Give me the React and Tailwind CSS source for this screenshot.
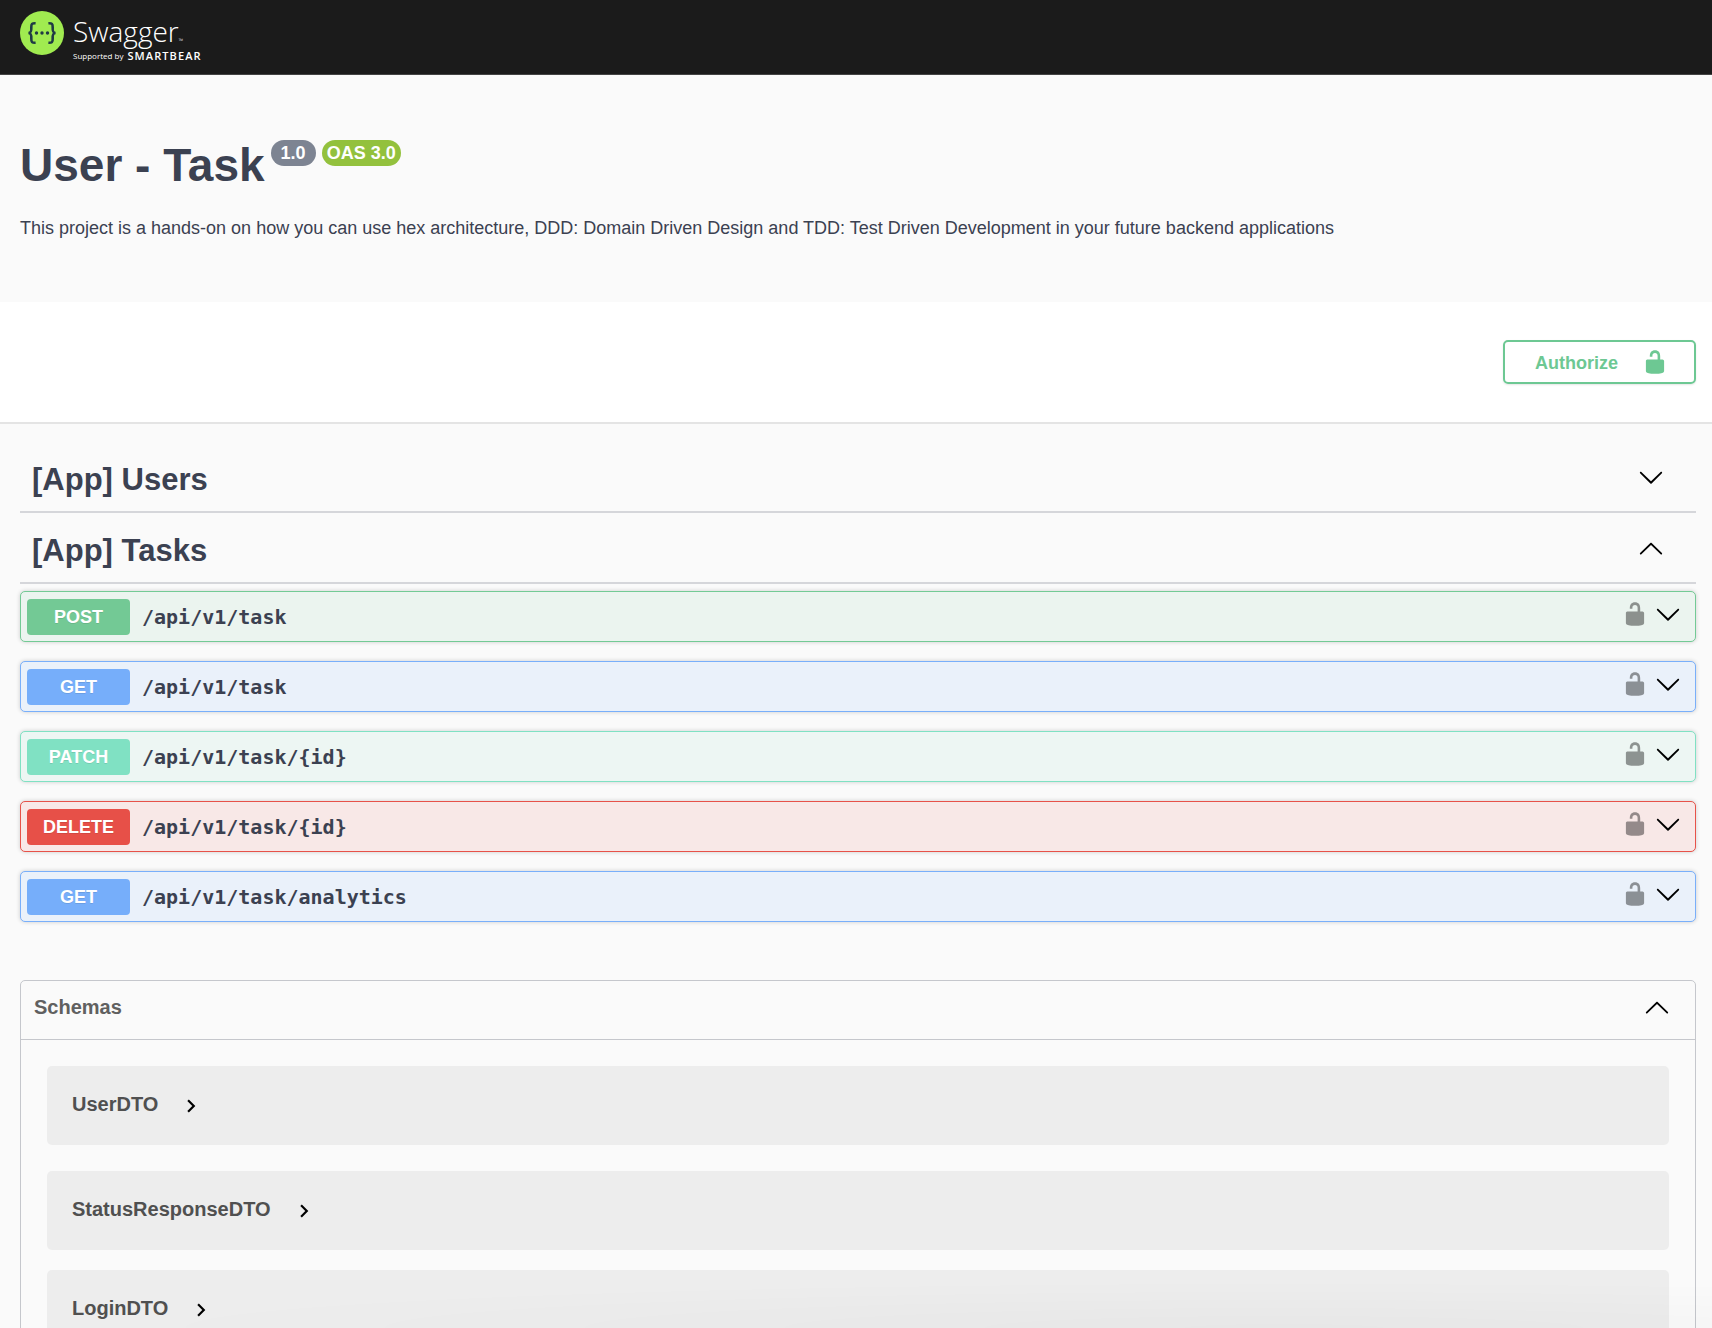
import { useState } from "react";
import clsx from "clsx";

const METHOD_STYLES = {
  POST: { block: "border-[#73ca95] bg-[#ebf4ef]", badge: "bg-[#73c995]" },
  GET: { block: "border-[#79affa] bg-[#eaf1fa]", badge: "bg-[#76aefa]" },
  PATCH: { block: "border-[#80e1c3] bg-[#edf6f3]", badge: "bg-[#80e1c3]" },
  DELETE: { block: "border-[#e75249] bg-[#f8e8e7]", badge: "bg-[#e75048]" },
};

const TAGS = [
  { name: "[App] Users", open: false, operations: [] },
  {
    name: "[App] Tasks",
    open: true,
    operations: [
      { method: "POST", path: "/api/v1/task" },
      { method: "GET", path: "/api/v1/task" },
      { method: "PATCH", path: "/api/v1/task/{id}" },
      { method: "DELETE", path: "/api/v1/task/{id}" },
      { method: "GET", path: "/api/v1/task/analytics" },
    ],
  },
];

const SCHEMAS = ["UserDTO", "StatusResponseDTO", "LoginDTO"];

function Arrow({ up, className }) {
  return (
    <svg
      viewBox="0 0 20 20"
      className={clsx("h-[26px] w-[26px] shrink-0", className)}
      aria-hidden="true"
    >
      {up ? (
        <path d="M17.418 14.891c.272.268.709.268.979 0s.271-.701 0-.969l-7.908-7.83c-.27-.268-.707-.268-.979 0l-7.908 7.83c-.27.268-.27.701 0 .969.271.268.709.268.979 0L10 7.75l7.418 7.141z" />
      ) : (
        <path d="M17.418 6.109c.272-.268.709-.268.979 0s.271.701 0 .969l-7.908 7.83c-.27.268-.707.268-.979 0l-7.908-7.83c-.27-.268-.27-.701 0-.969.271-.268.709-.268.979 0L10 13.25l7.418-7.141z" />
      )}
    </svg>
  );
}

function ArrowRight() {
  return (
    <svg viewBox="0 0 24 24" className="h-[26px] w-[26px] fill-black" aria-hidden="true">
      <path d="M10 6L8.59 7.41 13.17 12l-4.58 4.59L10 18l6-6z" />
    </svg>
  );
}

function Unlocked() {
  return (
    <svg viewBox="0 0 20 20" className="h-[26px] w-[26px] fill-current" aria-hidden="true">
      <path d="M15.8 8H14V5.6C14 2.703 12.665 1 10 1 7.334 1 6 2.703 6 5.6V6h2v-.801C8 3.754 8.797 3 10 3c1.203 0 2 .754 2 2.199V8H4c-.553 0-1 .646-1 1.199V17c0 .549.428 1.139.951 1.307l1.197.387C5.672 18.861 6.55 19 7.1 19h5.8c.549 0 1.428-.139 1.951-.307l1.196-.387c.524-.167.953-.757.953-1.306V9.199C17 8.646 16.352 8 15.8 8z" />
    </svg>
  );
}

function Logo() {
  return (
    <a href="#" className="flex items-start gap-[9px] text-white">
      <svg viewBox="0 0 44 44" className="h-11 w-11" aria-hidden="true">
        <circle cx="22" cy="22" r="22" fill="#a0eb50" />
        <g fill="none" stroke="#1f3a45" strokeWidth="2.6">
          <path d="M15.6 12.2c-3.6-.2-4.4.8-4.3 4.2.2 3.6-.1 5.4-2.8 5.6 2.7.2 3 2 2.8 5.6-.1 3.400.7 4.400 4.300 4.200" />
          <path d="M28.400 12.200c3.600-.2 4.400.8 4.300 4.200-.2 3.600.1 5.400 2.800 5.600-2.700.2-3 2-2.800 5.600.1 3.400-.7 4.400-4.300 4.200" />
        </g>
        <g fill="#1f3a45">
          <circle cx="16.5" cy="22" r="1.7" />
          <circle cx="22" cy="22" r="1.7" />
          <circle cx="27.5" cy="22" r="1.7" />
        </g>
      </svg>
      <span className="flex flex-col font-['Open_Sans',sans-serif]">
        <span className="flex items-end text-[28px] leading-10 font-light">
          Swagger
          <span className="text-[6px] leading-5">™</span>
        </span>
        <span className="flex items-center gap-1 text-[8px] leading-[10px]">
          Supported by
          <span className="text-[11px] font-semibold tracking-widest">SMARTBEAR</span>
        </span>
      </span>
    </a>
  );
}

function Operation({ method, path }) {
  const styles = METHOD_STYLES[method];

  return (
    <div
      className={clsx(
        "flex h-[51px] items-center rounded-[5px] border pr-3.5 pl-1.5 shadow-[0_0_4px_rgba(0,0,0,0.19)]",
        styles.block,
      )}
    >
      <button type="button" className="flex flex-1 items-center gap-3 text-left">
        <span
          className={clsx(
            "w-[103px] rounded-sm text-center text-lg leading-9 font-bold text-white [text-shadow:0_1px_0_rgba(0,0,0,0.1)]",
            styles.badge,
          )}
        >
          {method}
        </span>
        <span className="font-['DejaVu_Sans_Mono',monospace] text-xl leading-9 font-bold">
          {path}
        </span>
      </button>
      <div className="flex gap-[7px] pb-1.5">
        <button
          type="button"
          className="text-black opacity-40"
          aria-label="authorization button unlocked"
        >
          <Unlocked />
        </button>
        <button type="button" aria-label={`Expand ${method} ${path}`}>
          <Arrow className="fill-black" />
        </button>
      </div>
    </div>
  );
}

function TagSection({ tag }) {
  const [open, setOpen] = useState(tag.open);

  return (
    <section>
      <h3 className="border-b-2 border-[#d5d6da] text-[31px] leading-[63px] font-bold">
        <button
          type="button"
          className="flex w-full items-center justify-between pr-8 pl-3 text-left"
          onClick={() => setOpen(!open)}
        >
          <span className="pt-1.5">{tag.name}</span>
          <Arrow up={open} className="fill-black" />
        </button>
      </h3>
      {open && (
        <div className="flex flex-col gap-[19px] pt-[7px]">
          {tag.operations.map((op) => (
            <Operation key={op.method + op.path} {...op} />
          ))}
        </div>
      )}
    </section>
  );
}

function Schemas() {
  const [open, setOpen] = useState(true);

  return (
    <section className="mt-[58px] rounded-[5px] border border-[#c5c7cc] text-[#505050]">
      <h4 className="border-b border-[#c5c7cc] pb-1.5 text-xl leading-[52px] font-bold text-[#606060]">
        <button
          type="button"
          className="flex w-full items-center justify-between pr-[25px] pl-[13px] text-left"
          onClick={() => setOpen(!open)}
        >
          Schemas
          <Arrow up={open} className="fill-black" />
        </button>
      </h4>
      {open && (
        <div className="px-[26px] pt-[26px]">
          {SCHEMAS.map((name) => (
            <div
              key={name}
              className="mb-5 rounded-[5px] bg-[#ededed] px-[25px] py-6 first:mb-[26px]"
            >
              <button
                type="button"
                className="flex items-center gap-5 text-xl leading-[29px] font-bold"
              >
                <span className="pb-0.5">{name}</span>
                <ArrowRight />
              </button>
            </div>
          ))}
        </div>
      )}
    </section>
  );
}

export default function App() {
  return (
    <div className="h-screen overflow-hidden bg-[#fafafa] font-['Liberation_Sans',Arial,sans-serif] text-[#3b4151]">
      <header className="h-[75px] border-b border-[#444] bg-[#1b1b1b] px-5 pt-[11px]">
        <Logo />
      </header>

      <div className="px-5 pt-[65px] pb-[62px]">
        <h2 className="flex items-start gap-1.5 text-[46px] leading-[50px] font-bold">
          User - Task
          <span className="rounded-full bg-[#7d8492] px-2.5 text-lg leading-[26px] text-white">
            1.0
          </span>
          <span className="rounded-full bg-[#93c13d] px-[5px] text-lg leading-[26px] text-white">
            OAS 3.0
          </span>
        </h2>
        <p className="mt-[26px] text-lg leading-6">
          This project is a hands-on on how you can use hex architecture, DDD: Domain Driven Design
          and TDD: Test Driven Development in your future backend applications
        </p>
      </div>

      <div className="flex justify-end border-b-2 border-[#e4e4e4] bg-white px-4 py-[38px]">
        <button
          type="button"
          className="flex h-11 items-center gap-6 rounded-[5px] border-2 border-[#6dc893] pr-[26px] pl-[30px] text-lg font-bold text-[#6dc893] shadow-[0_1px_2px_rgba(0,0,0,0.1)]"
        >
          <span className="pt-0.5">Authorize</span>
          <Unlocked />
        </button>
      </div>

      <main className="pt-[18px] pr-4 pl-5">
        {TAGS.map((tag) => (
          <TagSection key={tag.name} tag={tag} />
        ))}
        <Schemas />
      </main>

      {/* soft shade along the bottom edge of the window */}
      <div className="pointer-events-none fixed inset-x-0 bottom-0 h-12 bg-[radial-gradient(70%_100%_at_75%_100%,rgba(0,0,0,0.025),transparent)]" />
    </div>
  );
}
